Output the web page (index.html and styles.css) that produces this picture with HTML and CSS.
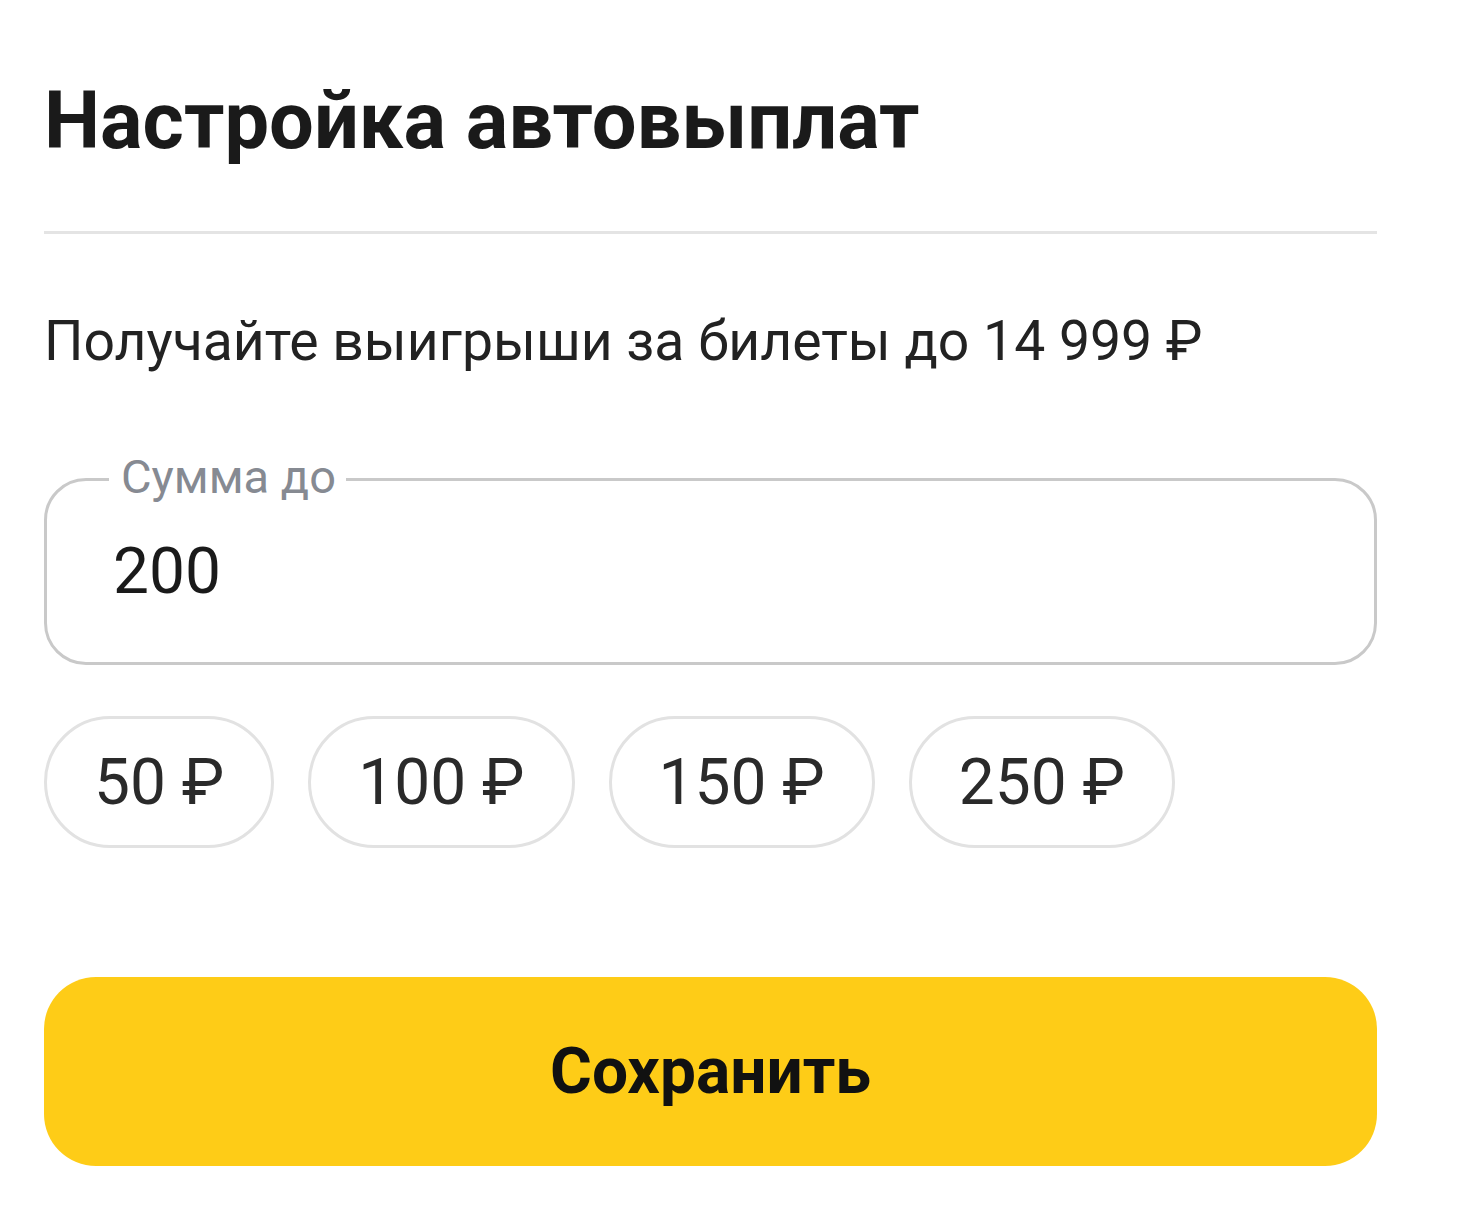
FILE: index.html
```html
<!DOCTYPE html>
<html lang="ru">
<head>
<meta charset="utf-8">
<title>Настройка автовыплат</title>
<link rel="stylesheet" href="styles.css">
</head>
<body>
<main class="panel">
  <h1 class="title">Настройка автовыплат</h1>
  <div class="divider"></div>
  <p class="lead">Получайте выигрыши за билеты до 14&nbsp;999&nbsp;₽</p>
  <div class="field">
    <span class="field-label">Сумма до</span>
    <input class="field-input" type="text" value="200">
  </div>
  <div class="chips">
    <button class="chip">50 ₽</button>
    <button class="chip">100 ₽</button>
    <button class="chip">150 ₽</button>
    <button class="chip">250 ₽</button>
  </div>
  <button class="save">Сохранить</button>
</main>
</body>
</html>
```
FILE: styles.css
```css
* { box-sizing: border-box; }
html, body { margin: 0; padding: 0; background: #fff; }
body { font-family: Roboto, "Noto Sans", sans-serif; color: #1c1c1c; }

.panel {
  width: 1377px;
  padding: 74px 0 0 44px;
  display: flex;
  flex-direction: column;
}

.title {
  margin: 0;
  font-size: 79.4px;
  line-height: 94px;
  font-weight: 700;
  color: #1a1a1a;
}

.divider {
  margin-top: 63px;
  height: 3px;
  background: #e4e4e4;
}

.lead {
  margin: 75px 0 0;
  font-size: 55.3px;
  line-height: 66px;
  color: #222;
}

.field {
  position: relative;
  margin-top: 103px;
  height: 187px;
  border: 3px solid #c9c9c9;
  border-radius: 42px;
}

.field-label {
  position: absolute;
  top: -31px;
  left: 62px;
  padding: 0 10px 0 12px;
  background: #fff;
  font-size: 47px;
  line-height: 54px;
  color: #868a92;
}

.field-input {
  width: 100%;
  height: 100%;
  border: 0;
  outline: 0;
  background: transparent;
  padding: 0 0 0 66px;
  font-family: inherit;
  font-size: 64px;
  color: #1a1a1a;
}

.chips {
  margin-top: 51px;
  display: flex;
  gap: 34px;
}

.chip {
  height: 132px;
  padding: 0 47px;
  border: 3px solid #e2e2e2;
  border-radius: 66px;
  background: #fff;
  font-family: inherit;
  font-size: 64px;
  color: #2a2a2a;
}

.save {
  margin-top: 129px;
  height: 189px;
  border: 0;
  border-radius: 52px;
  background: #fecc17;
  font-family: inherit;
  font-size: 64px;
  font-weight: 700;
  color: #111;
}
```
